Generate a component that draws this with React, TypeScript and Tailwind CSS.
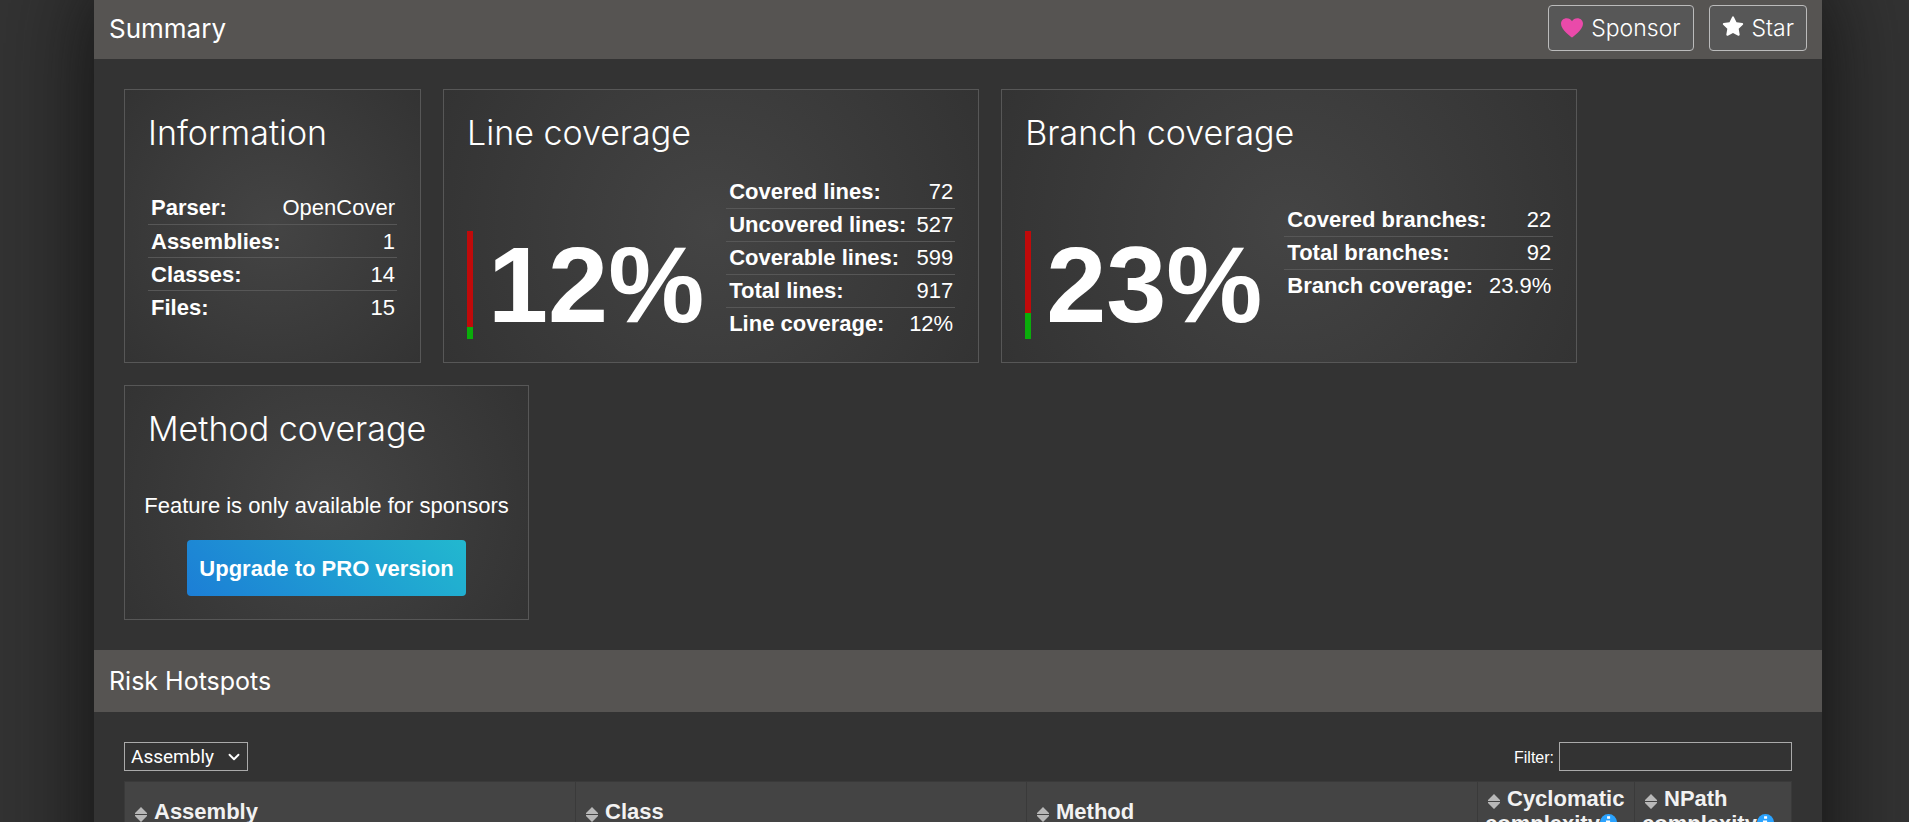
import { ChevronDown } from "lucide-react";
import type { ReactNode } from "react";

const headingFont = "font-['Century_Gothic',Inter,sans-serif]";

function Rows({ rows }: { rows: [string, string][] }) {
  return (
    <tbody>
      {rows.map(([label, value]) => (
        <tr key={label} className="h-[33px] border-b border-[#575757] last:border-b-0">
          <th scope="row" className="p-0 pl-[3px] text-left font-bold">{label}</th>
          <td className="p-0 pr-[2px] text-right">{value}</td>
        </tr>
      ))}
    </tbody>
  );
}

function Card({ title, className = "", children }: { title: string; className?: string; children: ReactNode }) {
  return (
    <section
      className={`flex flex-col border border-[#575757] bg-[radial-gradient(circle,#444,#333)] px-[23px] pt-[23px] pb-[22px] ${className}`}
    >
      <h2 className={`${headingFont} mb-[22px] text-[34px] leading-[40px] font-light`}>{title}</h2>
      <div className="flex grow items-center justify-center">{children}</div>
    </section>
  );
}

function Gauge({ value, covered }: { value: string; covered: number }) {
  return (
    <div className="mr-[22px] mb-[1px] flex self-end">
      <div className="mr-[15px] flex h-[108px] w-[6px] flex-col bg-[#c00a0a]">
        <div className="mt-auto bg-[#0aad0a]" style={{ height: `${covered}%` }} />
      </div>
      <div className="text-[108px] leading-[108px] font-bold">{value}</div>
    </div>
  );
}

function HeartIcon() {
  return (
    <svg viewBox="0 0 16 16" className="mr-[8px] size-[22px]" fill="#ea4aaa" aria-hidden="true">
      <path d="m8 14.9C7 14.2 0 9.3 0 4.9 0 2.4 1.9.9 4.1.9 5.8.9 7.2 1.800 8 3.020 8.800 1.800 10.200.9 11.900.9 14.100.9 16 2.400 16 4.900 16 9.300 9 14.200 8 14.900Z" />
    </svg>
  );
}

function StarIcon() {
  return (
    <svg viewBox="0 0 16 16" className="mr-[8px] mb-[2px] size-[22px]" fill="#fff" aria-hidden="true">
      <path d="M8 .25a.75.75 0 0 1 .673.418l1.882 3.815 4.21.612a.75.75 0 0 1 .416 1.279l-3.046 2.97.719 4.192a.751.751 0 0 1-1.088.791L8 12.347l-3.766 1.98a.75.75 0 0 1-1.088-.79l.72-4.194L.818 6.374a.75.75 0 0 1 .416-1.28l4.21-.611L7.327.668A.75.75 0 0 1 8 .25Z" />
    </svg>
  );
}

function SortIcon() {
  return (
    <svg viewBox="0 0 12 15" className="mr-[7px] ml-[3px] inline-block h-[15px] w-[12px] align-[-3px]" fill="#b8b8b8" aria-hidden="true">
      <path d="M6 0 12 6V7H0V6Z M0 8H12V9L6 15 0 9Z" />
    </svg>
  );
}

function InfoIcon() {
  return (
    <svg viewBox="0 0 18 18" className="inline-block size-[17px] align-[0px]" aria-hidden="true">
      <circle cx="9" cy="9" r="9" fill="#2aa3ff" />
      <path d="M7.5 2.5h3.2v2.6H7.5Z M6.3 7h4.4v6h1.5v2H6v-2h1.6V9H6.3Z" fill="#fff" />
    </svg>
  );
}

const actionButton =
  "flex h-[46px] items-center rounded-[4px] border border-[#bbb] bg-[#575757] px-[12px] text-[23px] font-light";

export default function App() {
  return (
    <div className="h-screen overflow-hidden bg-[#333] pr-[87px] pl-[94px] font-['Liberation_Sans',Arial,sans-serif] text-[22px] leading-[25px] text-white">
      <main className="bg-[#333] pb-[90px] shadow-[0_-20px_90px_#101010]">
        <header className={`${headingFont} flex h-[59px] items-center bg-[#565452] px-[15px] pb-[3px]`}>
          <h1 className="pt-[2px] text-[26px] leading-[32px]">Summary</h1>
          <div className="ml-auto flex gap-[15px]">
            <button className={actionButton}>
              <HeartIcon />
              Sponsor
            </button>
            <button className={actionButton}>
              <StarIcon />
              Star
            </button>
          </div>
        </header>

        <div className="flex flex-wrap gap-[22px] p-[30px]">
          <Card title="Information">
            <table className="w-[249px] border-collapse">
              <Rows rows={[["Parser:", "OpenCover"], ["Assemblies:", "1"], ["Classes:", "14"], ["Files:", "15"]]} />
            </table>
          </Card>
          <Card title="Line coverage">
            <Gauge value="12%" covered={11} />
            <table className="w-[229px] border-collapse">
              <Rows
                rows={[
                  ["Covered lines:", "72"],
                  ["Uncovered lines:", "527"],
                  ["Coverable lines:", "599"],
                  ["Total lines:", "917"],
                  ["Line coverage:", "12%"],
                ]}
              />
            </table>
          </Card>
          <Card title="Branch coverage">
            <Gauge value="23%" covered={24} />
            <table className="mb-[10px] w-[269px] border-collapse">
              <Rows rows={[["Covered branches:", "22"], ["Total branches:", "92"], ["Branch coverage:", "23.9%"]]} />
            </table>
          </Card>
          <Card title="Method coverage" className="w-[405px]">
            <div className="flex flex-col items-center gap-[22px] pt-[22px] pb-[1px]">
              <p className="whitespace-nowrap">Feature is only available for sponsors</p>
              <a
                href="#pro"
                className="flex h-[56px] items-center rounded-[4px] bg-[linear-gradient(45deg,#1c7ed6,#22b8cf)] px-[12px] font-bold"
              >
                Upgrade to PRO version
              </a>
            </div>
          </Card>
        </div>

        <header className={`${headingFont} flex h-[62px] items-center bg-[#565452] px-[15px]`}>
          <h1 className="text-[25px] leading-[32px]">Risk Hotspots</h1>
        </header>
        <div className="p-[30px]">
          <div className="mb-[10px] flex justify-between">
            <div className="relative">
              <select
                aria-label="Grouping"
                className="block h-[29px] w-[124px] appearance-none border border-[#aaa] bg-[#333] px-[6px] font-[Roboto,sans-serif] text-[19px] leading-[25px]"
              >
                <option>Assembly</option>
              </select>
              <ChevronDown className="pointer-events-none absolute top-[6px] right-[5px] size-[18px]" strokeWidth={2.5} />
            </div>
            <label className="flex items-center gap-[5px] text-[16px]">
              <span className="pt-[2px]">Filter:</span>
              <input type="text" className="h-[29px] w-[233px] border border-[#aaa] bg-[#333] px-[5px]" />
            </label>
          </div>
          <table className="w-full table-fixed border-collapse bg-[#444] text-[#f2f2f2]">
            <thead>
              <tr>
                {["Assembly", "Class", "Method"].map((name) => (
                  <th key={name} className="border border-[#3a3a3a] px-[7px] py-[4px] text-left">
                    <SortIcon />
                    {name}
                  </th>
                ))}
                {["Cyclomatic", "NPath"].map((name) => (
                  <th key={name} className="w-[157px] border border-[#3a3a3a] px-[7px] py-[4px] text-left">
                    <SortIcon />
                    {name} complexity
                    <InfoIcon />
                  </th>
                ))}
              </tr>
            </thead>
          </table>
        </div>
      </main>
    </div>
  );
}
